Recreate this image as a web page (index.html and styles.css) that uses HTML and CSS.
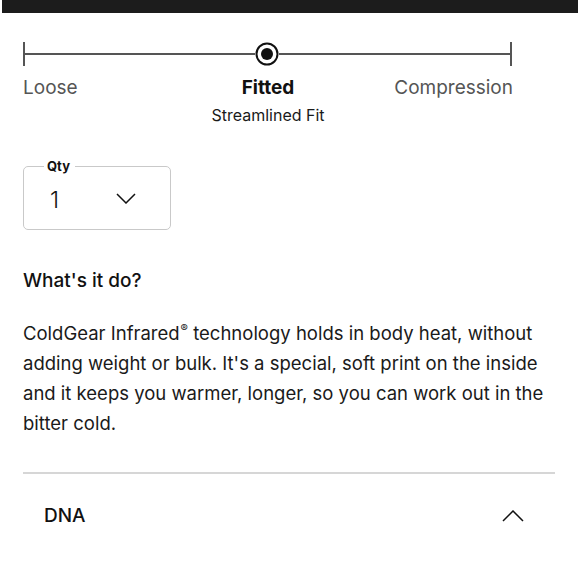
FILE: index.html
```html
<!DOCTYPE html>
<html lang="en">
<head>
<meta charset="utf-8">
<title>Product details</title>
<link rel="stylesheet" href="styles.css">
</head>
<body>
<div class="topbar"></div>
<main class="page">
  <section class="fit">
    <svg class="track" width="490" height="24" viewBox="0 0 490 24" aria-hidden="true">
      <line x1="1" y1="0" x2="1" y2="24" stroke="#555" stroke-width="2"/>
      <line x1="488" y1="0" x2="488" y2="24" stroke="#555" stroke-width="2"/>
      <line x1="1" y1="12" x2="232" y2="12" stroke="#555" stroke-width="2"/>
      <line x1="256" y1="12" x2="488" y2="12" stroke="#555" stroke-width="2"/>
      <circle cx="244" cy="12" r="10.5" fill="#fff" stroke="#111" stroke-width="2"/>
      <circle cx="244" cy="12" r="6" fill="#111"/>
    </svg>
    <div class="fit-labels">
      <span class="fit-left">Loose</span>
      <span class="fit-mid">
        <strong class="fit-current">Fitted</strong>
        <span class="fit-sub">Streamlined Fit</span>
      </span>
      <span class="fit-right">Compression</span>
    </div>
  </section>

  <fieldset class="qty">
    <legend class="qty-label">Qty</legend>
    <div class="qty-row">
      <span class="qty-value">1</span>
      <svg class="chev chev-down" width="20" height="11" viewBox="0 0 20 11" aria-hidden="true">
        <polyline points="1,1 10,10 19,1" fill="none" stroke="#111" stroke-width="1.5"/>
      </svg>
    </div>
  </fieldset>

  <h2 class="heading">What's it do?</h2>
  <p class="desc">ColdGear Infrared<span class="reg">®</span> technology holds in body heat, without adding weight or bulk. It's a special, soft print on the inside and it keeps you warmer, longer, so you can work out in the bitter cold.</p>

  <div class="accordion">
    <span class="acc-title">DNA</span>
    <svg class="chev" width="22" height="12" viewBox="0 0 22 12" aria-hidden="true">
      <polyline points="1,11 11,1 21,11" fill="none" stroke="#111" stroke-width="1.5"/>
    </svg>
  </div>
</main>
</body>
</html>
```

FILE: styles.css
```css
* { box-sizing: border-box; }
html, body { margin: 0; padding: 0; background: #fff; }
body {
  font-family: Inter, "Noto Sans", "Liberation Sans", sans-serif;
  color: #1a1a1a;
}
.topbar {
  height: 13px;
  margin: 0 2px;
  background: #1c1c1c;
}
.page {
  padding: 0 25px 0 23px;
}
.fit {
  padding-top: 29px;
  width: 490px;
}
.track { display: block; }
.fit-labels {
  display: grid;
  grid-template-columns: 1fr auto 1fr;
  margin-top: 10px;
  font-size: 19px;
  line-height: 24px;
  color: #555;
}
.fit-left { justify-self: start; }
.fit-right { justify-self: end; }
.fit-mid {
  display: flex;
  flex-direction: column;
  align-items: center;
}
.fit-current {
  font-weight: 700;
  color: #111;
}
.fit-sub {
  margin-top: 5px;
  font-size: 16px;
  line-height: 20px;
  color: #1a1a1a;
}
.qty {
  margin: 33px 0 0 0;
  width: 148px;
  height: 72px;
  padding: 0 0 0 26px;
  border: 1px solid #c9c9c9;
  border-radius: 5px;
}
.qty-label {
  padding: 0 5px 0 3px;
  margin-left: -6px;
  font-size: 13px;
  font-weight: 700;
  color: #111;
}
.qty-row {
  display: flex;
  align-items: center;
  gap: 57px;
  margin-top: 13px;
}
.qty-value {
  font-size: 23px;
  font-weight: 300;
  line-height: 26px;
  color: #111;
}
.chev { display: block; }
.chev-down { margin-top: -4px; }
.heading {
  margin: 39px 0 0 0;
  font-size: 19px;
  font-weight: 500;
  line-height: 24px;
  color: #111;
}
.desc {
  margin: 25px 0 0 0;
  font-size: 18.5px;
  line-height: 30px;
  color: #1a1a1a;
}
.reg {
  font-size: 11px;
  line-height: 0;
  vertical-align: 8px;
  margin-left: 1px;
}
.accordion {
  margin-top: 34px;
  border-top: 2px solid #d6d6d6;
  display: flex;
  align-items: center;
  justify-content: space-between;
  padding: 30px 31px 0 21px;
}
.acc-title {
  font-size: 19px;
  font-weight: 500;
  line-height: 24px;
  color: #111;
}
```
